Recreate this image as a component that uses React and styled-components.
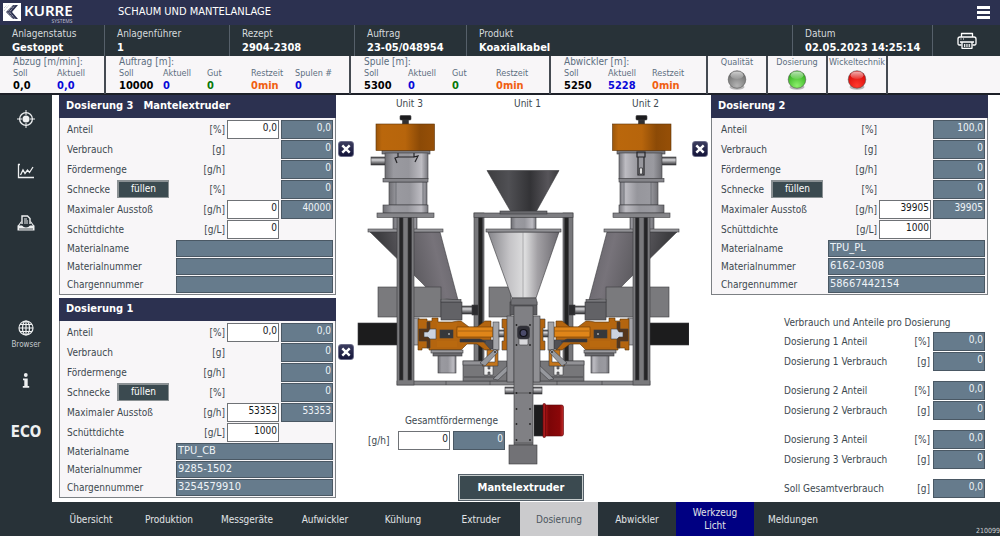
import React from "react";
import styled, { createGlobalStyle, css } from "styled-components";

const color = {
  navy: "#2c3150",
  slate: "#283238",
  steel: "#667b8c",
  paper: "#f8f6f8",
  label: "#3c484f",
  muted: "#5c6e80",
  line: "#7c8084",
};

const GlobalStyle = createGlobalStyle`
  *, *::before, *::after { box-sizing: border-box; }
  body {
    margin: 0;
    background: #fff;
    color: ${color.label};
    font: 10px/14px "DejaVu Sans Condensed", "Noto Sans", "DejaVu Sans", sans-serif;
  }
  button, input { font: inherit; color: inherit; }
  h1, h2, h3, p, dl, dd, dt { margin: 0; font-weight: normal; }
`;

const Page = styled.div`
  display: flex;
  flex-direction: column;
  min-height: 100vh;
`;

/* ---------- header ---------- */

const TitleBar = styled.header`
  display: grid;
  grid-template-columns: 118px 1fr auto;
  align-items: start;
  height: 25px;
  background: ${color.navy};
  color: #fff;
`;

const Brand = styled.div`
  display: flex;
  gap: 3px;
  padding: 3px 0 0 3px;
`;

const BrandText = styled.div`
  display: flex;
  flex-direction: column;
  align-items: flex-end;
  font-family: "Noto Sans", sans-serif;
  strong { font-size: 15px; line-height: 15px; font-weight: 600; }
  small { font-size: 5px; line-height: 7px; color: #b9bccb; }
`;

const Title = styled.h1`
  font-size: 11px;
  line-height: 23px;
`;

const IconButton = styled.button`
  display: flex;
  align-items: center;
  justify-content: center;
  padding: 0;
  border: 0;
  background: none;
  color: #fff;
`;

const MenuButton = styled(IconButton)`
  width: 34px;
  height: 25px;
`;

const StatusBar = styled.dl`
  display: grid;
  grid-template-columns: 104px 125px 125px 112px 1fr 140px 68px;
  height: 31px;
  background: ${color.slate};
  > * + * { border-left: 1px solid #56606a; }
`;

const StatusCell = styled.div`
  padding: 1px 0 0 12px;
  dt { color: #d6dadd; font-size: 10px; line-height: 15px; }
  dd { color: #fff; font-size: 11px; line-height: 14px; font-weight: bold; }
`;

const PrintCell = styled.div`
  display: grid;
  place-items: center;
`;

const MetricBar = styled.div`
  display: grid;
  grid-template-columns: 104px 245px 200px 157px 60px 60px 60px 1fr;
  height: 39px;
  background: ${color.paper};
  border-bottom: 2px solid #1d2028;
  > * + * { border-left: 2px solid #454a52; }
`;

const MetricGroup = styled.section`
  padding: 0 0 0 13px;
  h2 { font-size: 10px; line-height: 12px; color: ${color.muted}; }
`;

const MetricList = styled.dl`
  display: grid;
  grid-auto-flow: column;
  grid-auto-columns: 44px;
  white-space: nowrap;
  dt { font-size: 9px; line-height: 10px; color: ${color.muted}; }
`;

const MetricValue = styled.dd`
  font-size: 11px;
  line-height: 16px;
  font-weight: bold;
  color: ${(p) => p.$tone};
`;

const LampCell = styled.div`
  display: flex;
  flex-direction: column;
  align-items: center;
  font-size: 9px;
  line-height: 12px;
  white-space: nowrap;
  color: ${color.muted};
  svg { margin-top: 1px; }
`;

/* ---------- body ---------- */

const Body = styled.div`
  display: grid;
  grid-template-columns: 52px 1fr;
  flex: 1;
`;

const Sidebar = styled.nav`
  display: flex;
  flex-direction: column;
  padding-top: 12px;
  background: ${color.slate};
  color: #eef0f1;
`;

const SideGroup = styled.div`
  display: flex;
  flex-direction: column;
  gap: 28px;
  margin-top: ${(p) => p.$before || 0}px;
`;

const SideButton = styled(IconButton)`
  flex-direction: column;
  gap: 4px;
  min-height: 24px;
  color: inherit;
  font-weight: bold;
  font-size: 15px;
  small { font-size: 8px; line-height: 10px; font-weight: normal; color: #c5cacd; }
`;

const Workspace = styled.main`
  display: grid;
  grid-template-columns: 277px 1fr 277px;
  padding: 0 12px 0 7px;
`;

const Column = styled.div`
  display: flex;
  flex-direction: column;
  gap: 3px;
`;

const Panel = styled.section`
  border: 1px solid ${color.line};
  border-top: 0;
  background: ${color.paper};
`;

const PanelTitle = styled.h2`
  display: flex;
  gap: 10px;
  height: 23px;
  padding-left: 7px;
  margin: 0 -1px;
  background: ${color.navy};
  color: #fff;
  font-size: 11px;
  line-height: 22px;
  font-weight: bold;
`;

const Rows = styled.div`
  padding: 2px 2px 0 ${(p) => p.$inset}px;
`;

const Row = styled.div`
  display: grid;
  grid-template-columns: auto 1fr 52px 52px;
  align-items: start;
  column-gap: 2px;
  height: 20px;
  line-height: 20px;
`;

const Unit = styled.span`
  text-align: right;
`;

const LabelGroup = styled.span`
  display: flex;
  gap: 7px;
`;

const TextRow = styled.div`
  display: grid;
  grid-template-columns: 1fr 157px;
  height: 18px;
  line-height: 18px;
`;

const Field = styled.input`
  width: 100%;
  height: 19px;
  padding: 0 1px 3px;
  border: 1px solid #6f7276;
  border-radius: 0;
  outline: 0;
  background: #fff;
  color: #15181a;
  text-align: right;
  grid-column: ${(p) => p.$col || "auto"};
  ${(p) => p.$readout && css`
    background: ${color.steel};
    border-color: #4a5864;
    color: #eef3f7;
  `}
  ${(p) => p.$text && css`
    height: 17px;
    padding: 0 1px 1px;
    font-size: 11px;
    text-align: left;
  `}
`;

const FillButton = styled.button`
  width: 52px;
  height: 18px;
  padding: 0 0 1px;
  border: 2px solid #8b9194;
  border-right-width: 1px;
  border-bottom-width: 1px;
  background: #3b4a50;
  color: #fff;
  line-height: 14px;
`;

const Stage = styled.section`
  display: grid;
  grid-template-columns: 16px 332px 16px;
  justify-content: space-between;
  align-content: start;
  padding: 0 3px 0 2px;
`;

const ToggleColumn = styled.div`
  display: flex;
  flex-direction: column;
  gap: 187px;
  padding-top: 46px;
`;

const CloseButton = styled.button`
  display: flex;
  align-items: center;
  justify-content: center;
  width: 16px;
  height: 16px;
  padding: 0;
  border: 1px solid #6b6c88;
  border-radius: 3px;
  background: linear-gradient(#3b3c5e, #14153a);
`;

const Machine = styled.figure`
  position: relative;
  display: flex;
  flex-direction: column;
  margin: 0;
  svg { display: block; }
`;

const UnitNames = styled.div`
  display: flex;
  justify-content: space-between;
  height: 20px;
  padding: 2px 30px 0 39px;
`;

const TotalRate = styled.div`
  position: absolute;
  left: 11px;
  top: 318px;
  display: grid;
  grid-template-columns: 27px 52px 52px;
  column-gap: 3px;
  line-height: 20px;
  label { grid-column: 2 / 4; height: 18px; line-height: 16px; text-align: center; white-space: nowrap; }
`;

const ExtruderButton = styled.button`
  align-self: center;
  width: 126px;
  height: 27px;
  margin: 9px 4px 1px 0;
  padding: 0;
  border: 1px solid #56616a;
  outline: 1px solid #c6cccc;
  outline-offset: -2px;
  background: #3b4a50;
  color: #fff;
  font-size: 11px;
  font-weight: bold;
`;

const Summary = styled.section`
  padding: 15px 3px 0 73px;
  h2 { font-size: 10px; line-height: 19px; white-space: nowrap; }
`;

const SummaryGroup = styled.div`
  & + & { margin-top: 9px; }
`;

const SummaryRow = styled.div`
  display: grid;
  grid-template-columns: auto 1fr 52px;
  column-gap: 3px;
  height: 20px;
  line-height: 20px;
  white-space: nowrap;
`;

/* ---------- footer ---------- */

const TabBar = styled.nav`
  display: flex;
  height: 34px;
  padding-left: 52px;
  background: ${color.slate};
`;

const Tab = styled.button`
  flex: 0 1 78px;
  padding: 0 12px;
  border: 0;
  background: ${(p) => p.$bg || "transparent"};
  color: ${(p) => p.$fg || "#e2e5e7"};
  line-height: 13px;
`;

const Build = styled.small`
  align-self: flex-end;
  margin-left: auto;
  font-size: 7px;
  line-height: 9px;
  color: #d0d4d6;
`;

/* ---------- data ---------- */

const statuses = [
  ["Anlagenstatus", "Gestoppt"],
  ["Anlagenführer", "1"],
  ["Rezept", "2904-2308"],
  ["Auftrag", "23-05/048954"],
  ["Produkt", "Koaxialkabel"],
  ["Datum", "02.05.2023 14:25:14"],
];

const tone = { Soll: "#000", Aktuell: "#0808d8", Gut: "#087808", Restzeit: "#f06010", "Spulen #": "#0808d8" };

const metrics = [
  ["Abzug [m/min]:", [["Soll", "0,0"], ["Aktuell", "0,0"]]],
  ["Auftrag [m]:", [["Soll", "10000"], ["Aktuell", "0"], ["Gut", "0"], ["Restzeit", "0min"], ["Spulen #", "0"]]],
  ["Spule [m]:", [["Soll", "5300"], ["Aktuell", "0"], ["Gut", "0"], ["Restzeit", "0min"]]],
  ["Abwickler [m]:", [["Soll", "5250"], ["Aktuell", "5228"], ["Restzeit", "0min"]]],
];

const lamps = [
  ["Qualität", "gray", "#6f6f6f", "#b4b4b4"],
  ["Dosierung", "green", "#2fae1c", "#8df06c"],
  ["Wickeltechnik", "red", "#d80808", "#ff3a2e"],
];

const summary = [
  [["Dosierung 1 Anteil", "[%]", "0,0"], ["Dosierung 1 Verbrauch", "[g]", "0"]],
  [["Dosierung 2 Anteil", "[%]", "0,0"], ["Dosierung 2 Verbrauch", "[g]", "0"]],
  [["Dosierung 3 Anteil", "[%]", "0,0"], ["Dosierung 3 Verbrauch", "[g]", "0"]],
  [["Soll Gesamtverbrauch", "[g]", "0,0"]],
];

const tabs = ["Übersicht", "Produktion", "Messgeräte", "Aufwickler", "Kühlung", "Extruder", "Dosierung", "Abwickler", "Werkzeug Licht", "Meldungen"];

/* ---------- drawings ---------- */

const LogoMark = () => (
  <svg width="18" height="18" viewBox="0 0 18 18" aria-hidden="true">
    <rect width="18" height="18" fill="#fff" />
    <path d="M10 2h5L9 9l6 7h-5L3 9z" fill={color.navy} />
    <path d="M11 1 4.500 9l6.500 8M13 1 6.500 9l6.500 8" stroke="#fff" strokeWidth=".7" strokeDasharray="1.200 .8" fill="none" />
    <path d="M1 5l3-3M1 8l5-6" stroke="#8b8ea4" strokeWidth=".7" strokeDasharray="1 1" />
  </svg>
);

const MenuIcon = () => (
  <svg width="13" height="13" viewBox="0 0 13 13" fill="#fff" aria-hidden="true">
    <rect width="13" height="3" /><rect y="5" width="13" height="3" /><rect y="10" width="13" height="3" />
  </svg>
);

const PrinterIcon = () => (
  <svg width="20" height="18" viewBox="0 0 20 18" fill="none" stroke="#fff" strokeWidth="1.300" strokeLinejoin="round" aria-hidden="true">
    <path d="M4.500 5V1.500h11V5" />
    <path d="M4.500 13H2.200Q1 13 1 11.500V7q0-2 2-2h14q2 0 2 2v4.500q0 1.500-1.200 1.500h-2.300" />
    <path d="M3 10h14M5 10v6.300h10V10" />
    <path d="M7.500 12v3M9.200 12v3M10.900 12v3M12.600 12v3" strokeWidth=".9" />
    <path d="M3.500 7h1M6 7h1" strokeWidth="1" />
  </svg>
);

const TargetIcon = () => (
  <svg width="18" height="18" viewBox="0 0 18 18" stroke="currentColor" fill="none" aria-hidden="true">
    <circle cx="9" cy="9" r="6.400" strokeWidth="1.300" />
    <circle cx="9" cy="9" r="3.500" fill="currentColor" stroke="none" />
    <path d="M9 0v5M9 13v5M0 9h5M13 9h5" strokeWidth="1" />
  </svg>
);

const ChartIcon = () => (
  <svg width="18" height="16" viewBox="0 0 18 16" stroke="currentColor" fill="none" aria-hidden="true">
    <path d="M1.500 1v13.500H17M1 1.500h2" strokeWidth="1.300" />
    <path d="M3.500 12 6 7l2 3.500L10.500 7l2 2.500L16 4" strokeWidth="1.300" />
  </svg>
);

const TrayIcon = () => (
  <svg width="18" height="16" viewBox="0 0 18 16" fill="none" stroke="currentColor" aria-hidden="true">
    <path d="M5 9V1h5.500L13 3.500V9" strokeWidth="1.400" />
    <path d="M7 4h3M7 6h4M7 8h4" strokeWidth="1" />
    <path d="M4.500 6.500 1.200 11M13.500 6.500l3.300 4.500" strokeWidth="1.100" />
    <path d="M.5 10.500h4.500q1.500 2 4 2t4-2h4.500V15.500H.5z" fill="currentColor" stroke="none" />
    <path d="M2 14h14" stroke={color.slate} strokeWidth=".8" />
  </svg>
);

const GlobeIcon = () => (
  <svg width="16" height="16" viewBox="0 0 16 16" stroke="currentColor" fill="none" strokeWidth="1.200" aria-hidden="true">
    <circle cx="8" cy="8" r="7" /><ellipse cx="8" cy="8" rx="3.500" ry="7" />
    <path d="M8 1v14M1 8h14M2 4.500h12M2 11.500h12" />
  </svg>
);

const InfoIcon = () => (
  <svg width="8" height="15" viewBox="0 0 8 15" fill="currentColor" aria-hidden="true">
    <circle cx="3.800" cy="2" r="1.900" /><path d="M1 5.500h4.700V13H7.200v1.700H.8V13h1.500V7.200H1z" />
  </svg>
);

const CrossIcon = () => (
  <svg width="10" height="10" viewBox="0 0 10 10" stroke="#fff" strokeWidth="2.400" aria-hidden="true">
    <path d="M1.300 1.300l7.400 7.400M8.700 1.300L1.300 8.700" />
  </svg>
);

const Lamp = ({ id, dark, light }) => (
  <svg width="20" height="22" viewBox="0 0 20 22" aria-hidden="true">
    <defs>
      <radialGradient id={`lamp-${id}`} cx=".5" cy=".85" r=".75">
        <stop offset="0" stopColor={light} /><stop offset="1" stopColor={dark} />
      </radialGradient>
      <linearGradient id={`shine-${id}`} x2="0" y2="1">
        <stop offset="0" stopColor="#fff" stopOpacity=".7" /><stop offset="1" stopColor="#fff" stopOpacity=".1" />
      </linearGradient>
    </defs>
    <ellipse cx="10" cy="18" rx="7.500" ry="2.800" fill="#777" opacity=".5" />
    <circle cx="10" cy="10.500" r="8.800" fill={`url(#lamp-${id})`} stroke="#4a4a4a" strokeOpacity=".6" strokeWidth=".9" />
    <ellipse cx="10" cy="6.200" rx="6.400" ry="3.800" fill={`url(#shine-${id})`} />
  </svg>
);

/* One outer dosing station; the right one is the mirrored left one. */
const Station = () => (
  <g stroke="#3c3c40" strokeWidth=".6">
    <rect x="358" y="323" width="40" height="22" fill="#1c1c1d" />
    <rect x="474" y="213" width="10" height="149" fill="#77777a" />
    <rect x="478.500" y="217" width="4" height="145" fill="#222" />
    <rect x="393" y="216" width="24" height="15" fill="url(#metal)" />
    {/* slanted hopper */}
    <path d="M370 232H440L458 300 436 298 422 283z" fill="url(#hopper)" />
    <rect x="368" y="229" width="75" height="3" fill="#929296" />
    <rect x="378" y="287" width="63" height="30" fill="#7a7a7d" />
    <rect x="441" y="302" width="21" height="18" fill="#626266" />
    <rect x="441" y="299.500" width="20" height="2.500" fill="#77777b" />
    <rect x="462" y="306" width="16" height="8" fill="url(#tube)" />
    <rect x="472" y="305" width="6" height="10" fill="#2b2b2e" />
    {/* extruder head */}
    <rect x="413" y="318" width="6" height="27" fill="#a3a3a8" />
    <path d="M418 319h9v2h5v-3h6v4h14l6-1h3l8 6h8l8-6h6v29h-6l-8-6h-10l-6 6h-32v-2h-7v2h-4z" fill="#b4650f" stroke="#593207" />
    <path d="M419 329h8v-7h3v26h-3v-7h-8z" fill="#573519" />
    <path d="M470 340h12l8 9h3v-9z" fill="#515156" />
    <path d="M424 332h4l2-3h6v10h-6l-2-2h-4z" fill="#ccd3e1" />
    <path d="M437 323h20v6h-20zM437 341h20v6h-20z" fill="#b9690f" stroke="none" />
    <rect x="440" y="330" width="13" height="8" fill="#36383b" />
    <circle cx="449" cy="334" r="1" fill="#aaa" stroke="none" />
    <rect x="457" y="327" width="36" height="10" fill="#df8519" stroke="#6c3b06" />
    <path d="M458 331h34" stroke="#8b4d0b" />
    <path d="M460 339h20l6 3h-26z" fill="#34343a" />
    <rect x="493" y="322" width="6" height="28" fill="#a4a5a9" />
    <rect x="499" y="330" width="6" height="7" fill="url(#tube)" />
    <path d="M502 319h6v31h-6v-9h2v-13h-2z" fill="#b4650f" />
    <rect x="431" y="350" width="32" height="3" fill="#9a9a9f" />
    <rect x="433" y="353" width="29" height="3" fill="#6b6b70" />
    <rect x="438" y="356" width="18" height="17" fill="url(#metal)" />
    {/* support bracket */}
    <rect x="463" y="361" width="44" height="20" fill="#77777a" />
    <rect x="463" y="361" width="20" height="4" fill="#929296" />
    <path d="M464 377h34" stroke="#2e2e31" />
    <path d="M484 366h4v3h2v-3h3v9h-3v-3h-2v3h-4z" fill="#efefef" />
    <path d="M487 350h11v16h-16l5-5z" fill="#c4751a" />
    <path d="M490 354h5v8h-7z" fill="#fff" />
    <path d="M480 363l15-14 3 3-13 14zM493 379l16-15 3 3-14 13z" fill="#96989d" />
    <circle cx="495" cy="352" r="1" fill="#333" stroke="none" />
    <circle cx="510" cy="366" r="1" fill="#333" stroke="none" />
    {/* upright profile */}
    <rect x="397" y="213" width="17" height="172" fill="#7a7a7d" />
    <rect x="399.500" y="217" width="3.500" height="163" fill="#252527" />
    <rect x="408" y="217" width="3.500" height="163" fill="#252527" />
    {/* loader */}
    <rect x="371" y="157" width="17" height="8" fill="url(#tube)" />
    <rect x="382" y="150" width="48" height="4" fill="#77777c" />
    <rect x="385" y="153" width="43" height="26" fill="url(#metal)" />
    <rect x="389" y="182" width="38" height="23" fill="url(#metal)" />
    <path d="M396 182v23M423 182v23" stroke="#555960" />
    <rect x="383" y="178.500" width="45" height="3.500" fill="#85858a" />
    <rect x="383" y="205" width="45" height="8" fill="url(#metal)" />
    <rect x="377" y="213" width="57" height="4.500" fill="#858589" />
    <rect x="402.500" y="119" width="6" height="5" fill="#303033" />
    <rect x="400" y="115.500" width="11" height="4.500" rx="1" fill="#1c1c1e" />
  </g>
);

const MachineDrawing = () => (
  <svg width="332" height="350" viewBox="357 115 332 350" role="img" aria-label="Mantelextruder">
    <defs>
      <linearGradient id="lid">
        <stop offset="0" stopColor="#9c560a" /><stop offset=".1" stopColor="#ba670c" />
        <stop offset=".5" stopColor="#b7650c" /><stop offset=".75" stopColor="#8c4a06" /><stop offset="1" stopColor="#964f07" />
      </linearGradient>
      <linearGradient id="metal">
        <stop offset="0" stopColor="#6f6f74" /><stop offset=".2" stopColor="#9a9aa0" />
        <stop offset=".55" stopColor="#96969c" /><stop offset=".85" stopColor="#bdbcc2" /><stop offset="1" stopColor="#77777d" />
      </linearGradient>
      <linearGradient id="tube" x2="0" y2="1">
        <stop offset="0" stopColor="#3a3a3d" /><stop offset=".35" stopColor="#d5d5d8" /><stop offset="1" stopColor="#2c2c2f" />
      </linearGradient>
      <linearGradient id="hopper" gradientUnits="userSpaceOnUse" x1="385" y1="262" x2="455" y2="245">
        <stop offset="0" stopColor="#3d3d40" /><stop offset=".35" stopColor="#5e5c61" />
        <stop offset=".72" stopColor="#77737a" /><stop offset="1" stopColor="#67656b" />
      </linearGradient>
      <linearGradient id="funnel">
        <stop offset="0" stopColor="#3d3d3f" /><stop offset=".3" stopColor="#505054" />
        <stop offset=".6" stopColor="#333336" /><stop offset=".85" stopColor="#57555a" /><stop offset="1" stopColor="#3a3a3c" />
      </linearGradient>
      <linearGradient id="cone">
        <stop offset="0" stopColor="#85858a" /><stop offset=".3" stopColor="#c4c3c6" />
        <stop offset=".52" stopColor="#dededf" /><stop offset=".7" stopColor="#a2a0a4" /><stop offset="1" stopColor="#6b696f" />
      </linearGradient>
      <linearGradient id="motor">
        <stop offset="0" stopColor="#b51a1a" /><stop offset=".25" stopColor="#7b0507" />
        <stop offset=".8" stopColor="#8b0709" /><stop offset="1" stopColor="#c02a2a" />
      </linearGradient>
    </defs>

    <g stroke="#3c3c40" strokeWidth=".6">
      <rect x="489" y="287" width="22" height="30" fill="#7a7a7d" />
      <rect x="397" y="381" width="253" height="4" fill="#858588" />
      <path d="M446 381v4M490 381v4M557 381v4M602 381v4" />
    </g>
    <Station />
    <g transform="translate(1047 0) scale(-1 1)"><Station /></g>
    <g fill="url(#lid)" stroke="#5c3307" strokeWidth=".6">
      <rect x="376" y="124" width="58.500" height="26.500" />
      <rect x="612.500" y="124" width="58.500" height="26.500" />
    </g>

    <g fill="none" stroke="#252528" strokeWidth="1.200">
      <path d="M398 153v4l-3 1 2 5M414 153v4l4-1-3 6M398 157h16" />
      <path d="M637 152h8v5h-8zM638 157v18h6v-18" />
      <path d="M639.500 168h3v6h-3z" fill="#ddd" strokeWidth=".7" />
    </g>

    <g stroke="#39393d" strokeWidth=".6">
      <rect x="474" y="213" width="99" height="4.500" fill="#7d7d81" />
      <path d="M487 170.500H559L536 212H511z" fill="url(#funnel)" />
      <rect x="500" y="211" width="47" height="3" fill="#69696d" />
      <rect x="511" y="217.500" width="25" height="12" fill="url(#metal)" />
      <path d="M488 232H559L536 298H512z" fill="url(#cone)" />
      <path d="M523 232v66" stroke="#8d8d92" />
      <rect x="486" y="229" width="75" height="3" fill="#929296" />
      <rect x="507" y="316" width="7" height="66" fill="#909094" />
      <rect x="533" y="316" width="7" height="66" fill="#909094" />
      <rect x="505" y="387" width="9" height="7" fill="url(#tube)" />
      <rect x="533" y="387" width="9" height="7" fill="url(#tube)" />
      <rect x="510" y="302" width="27" height="13" fill="#5e5e62" />
      <rect x="514" y="306" width="19" height="139" fill="#808084" />
      <path d="M514 393h19M514 443h19" />
      <path d="M512 298h24l1 4v3h-26v-3z" fill="#727276" />
      <rect x="509" y="445" width="28" height="19" fill="#727276" />
      <rect x="519" y="338" width="9" height="7" rx="1" fill="#d9d9dc" />
      <rect x="517.500" y="326" width="12" height="13" rx="3" fill="#303038" />
      <circle cx="523.500" cy="333" r="3.500" fill="#4b4b6a" stroke="#0f0f15" strokeWidth="1.200" />
      <rect x="534" y="405" width="10" height="31" fill="#1c1c1d" />
      <rect x="544" y="405" width="19.500" height="31" rx="2" fill="url(#motor)" stroke="#5a0406" />
      <rect x="543" y="403.500" width="2.500" height="34" rx="1" fill="#a81a1c" stroke="#5a0406" />
    </g>
    <g fill="#222">
      {[325, 345, 393, 409, 424, 440].map((y) => (
        <React.Fragment key={y}>
          <circle cx="516.500" cy={y} r=".9" /><circle cx="530" cy={y} r=".9" />
        </React.Fragment>
      ))}
    </g>
  </svg>
);

/* ---------- composed parts ---------- */

function DosingPanel({ id, title, extra, inset = 7, share, max, density, material }) {
  const [shareSet, shareActual] = share;
  const [maxSet, maxActual] = max;
  const rows = [
    ["Anteil", "[%]", shareSet, shareActual],
    ["Verbrauch", "[g]", null, "0"],
    ["Fördermenge", "[g/h]", null, "0"],
    ["Schnecke", "[%]", null, "0"],
    ["Maximaler Ausstoß", "[g/h]", maxSet, maxActual],
    ["Schüttdichte", "[g/L]", density, null],
  ];
  const texts = ["Materialname", "Materialnummer", "Chargennummer"];
  return (
    <Panel>
      <PanelTitle><span>{title}</span>{extra && <span>{extra}</span>}</PanelTitle>
      <Rows $inset={inset}>
        {rows.map(([name, unit, set, actual], i) => {
          const key = `${id}-${i}`;
          return (
            <Row key={key}>
              <LabelGroup>
                <label htmlFor={key}>{name}</label>
                {name === "Schnecke" && <FillButton type="button">füllen</FillButton>}
              </LabelGroup>
              <Unit>{unit}</Unit>
              {set !== null && <Field $col="3" id={key} defaultValue={set} />}
              {actual !== null && (
                <Field $readout $col="4" id={set === null ? key : undefined} aria-label={`${name} Ist`} readOnly value={actual} />
              )}
            </Row>
          );
        })}
        {texts.map((name, i) => (
          <TextRow key={name}>
            <label htmlFor={`${id}-m${i}`}>{name}</label>
            <Field $readout $text id={`${id}-m${i}`} readOnly value={material[i]} />
          </TextRow>
        ))}
      </Rows>
    </Panel>
  );
}

const Close = ({ name }) => (
  <CloseButton type="button" aria-label={`${name} schließen`}><CrossIcon /></CloseButton>
);

export default function App() {
  return (
    <Page>
      <GlobalStyle />
      <TitleBar>
        <Brand>
          <LogoMark />
          <BrandText><strong>KURRE</strong><small>SYSTEMS</small></BrandText>
        </Brand>
        <Title>SCHAUM UND MANTELANLAGE</Title>
        <MenuButton type="button" aria-label="Menü"><MenuIcon /></MenuButton>
      </TitleBar>

      <StatusBar>
        {statuses.map(([name, value]) => (
          <StatusCell key={name}><dt>{name}</dt><dd>{value}</dd></StatusCell>
        ))}
        <PrintCell><IconButton type="button" aria-label="Drucken"><PrinterIcon /></IconButton></PrintCell>
      </StatusBar>

      <MetricBar>
        {metrics.map(([name, items]) => (
          <MetricGroup key={name}>
            <h2>{name}</h2>
            <MetricList>
              {items.map(([key, value]) => (
                <div key={key}><dt>{key}</dt><MetricValue $tone={tone[key]}>{value}</MetricValue></div>
              ))}
            </MetricList>
          </MetricGroup>
        ))}
        {lamps.map(([name, id, dark, light]) => (
          <LampCell key={id}>{name}<Lamp id={id} dark={dark} light={light} /></LampCell>
        ))}
        <div />
      </MetricBar>

      <Body>
        <Sidebar>
          <SideGroup>
            <SideButton type="button" aria-label="Ziel"><TargetIcon /></SideButton>
            <SideButton type="button" aria-label="Trend"><ChartIcon /></SideButton>
            <SideButton type="button" aria-label="Protokoll"><TrayIcon /></SideButton>
          </SideGroup>
          <SideGroup $before={85}>
            <SideButton type="button"><GlobeIcon /><small>Browser</small></SideButton>
          </SideGroup>
          <SideGroup $before={18}>
            <SideButton type="button" aria-label="Info"><InfoIcon /></SideButton>
            <SideButton type="button">ECO</SideButton>
          </SideGroup>
        </Sidebar>

        <Workspace>
          <Column>
            <DosingPanel id="d3" title="Dosierung 3" extra="Mantelextruder" share={["0,0", "0,0"]} max={["0", "40000"]} density="0" material={["", "", ""]} />
            <DosingPanel id="d1" title="Dosierung 1" share={["0,0", "0,0"]} max={["53353", "53353"]} density="1000" material={["TPU_CB", "9285-1502", "3254579910"]} />
          </Column>

          <Stage>
            <ToggleColumn><Close name="Dosierung 3" /><Close name="Dosierung 1" /></ToggleColumn>
            <Machine>
              <UnitNames><span>Unit 3</span><span>Unit 1</span><span>Unit 2</span></UnitNames>
              <MachineDrawing />
              <TotalRate>
                <label htmlFor="total">Gesamtfördermenge</label>
                <span>[g/h]</span>
                <Field id="total" defaultValue="0" />
                <Field $readout aria-label="Gesamtfördermenge Ist" readOnly value="0" />
              </TotalRate>
              <ExtruderButton type="button">Mantelextruder</ExtruderButton>
            </Machine>
            <ToggleColumn><Close name="Dosierung 2" /></ToggleColumn>
          </Stage>

          <Column>
            <DosingPanel id="d2" title="Dosierung 2" inset={9} share={[null, "100,0"]} max={["39905", "39905"]} density="1000" material={["TPU_PL", "6162-0308", "58667442154"]} />
            <Summary>
              <h2>Verbrauch und Anteile pro Dosierung</h2>
              {summary.map((group, g) => (
                <SummaryGroup key={g}>
                  {group.map(([name, unit, value], i) => (
                    <SummaryRow key={name}>
                      <label htmlFor={`s-${g}-${i}`}>{name}</label>
                      <Unit>{unit}</Unit>
                      <Field $readout id={`s-${g}-${i}`} readOnly value={value} />
                    </SummaryRow>
                  ))}
                </SummaryGroup>
              ))}
            </Summary>
          </Column>
        </Workspace>
      </Body>

      <TabBar>
        {tabs.map((name) => (
          <Tab
            key={name}
            type="button"
            $bg={name === "Dosierung" ? "#cbcbcd" : name === "Werkzeug Licht" ? "#000082" : undefined}
            $fg={name === "Dosierung" ? "#4b565d" : undefined}
          >
            {name}
          </Tab>
        ))}
        <Build>210099</Build>
      </TabBar>
    </Page>
  );
}
